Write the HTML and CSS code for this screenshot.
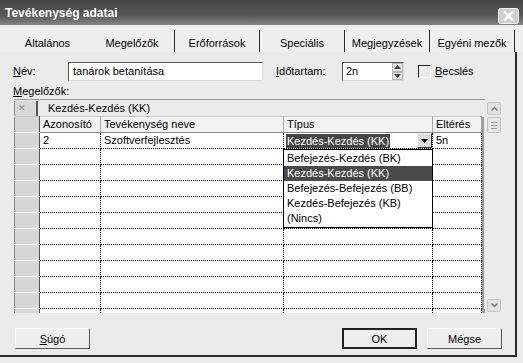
FILE: index.html
```html
<!DOCTYPE html>
<html lang="hu">

<head>
    <meta charset="UTF-8">
    <title>Tevékenység adatai</title>
    <link rel="stylesheet" href="styles.css">
</head>

<body>
    <div class="window">
        <div class="titlebar">
            <span class="title">Tevékenység adatai</span>
            <span class="close">
                <svg width="21" height="16" viewBox="0 0 21 16">
                    <rect x="0.5" y="0.5" width="20" height="15" rx="2" fill="#cfcfcf" stroke="#f2f2f2"/>
                    <path d="M6 3.5 L15 12.5 M15 3.5 L6 12.5" stroke="#fff" stroke-width="2.4"/>
                </svg>
            </span>
        </div>

        <div class="tabs">
            <div class="tab">Általános</div>
            <div class="tab edge">Megelőzők</div>
            <div class="tab edge">Erőforrások</div>
            <div class="tab edge">Speciális</div>
            <div class="tab edge">Megjegyzések</div>
            <div class="tab edge">Egyéni mezők</div>
        </div>

        <div class="page">
            <div class="fields">
                <span class="lbl name-lbl"><u>N</u>év:</span>
                <div class="textbox name-box">tanárok betanítása</div>
                <span class="lbl dur-lbl"><u>I</u>dőtartam:</span>
                <div class="textbox spin">
                    <span class="spin-val">2n</span>
                    <span class="spin-btns">
                        <span class="spin-btn"><svg width="7" height="4" viewBox="0 0 7 4"><path d="M0 4 L3.5 0 L7 4Z" fill="#444"/></svg></span>
                        <span class="spin-btn"><svg width="7" height="4" viewBox="0 0 7 4"><path d="M0 0 L3.5 4 L7 0Z" fill="#444"/></svg></span>
                    </span>
                </div>
                <span class="check"></span>
                <span class="lbl"><u>B</u>ecslés</span>
            </div>

            <div class="lbl pred-lbl"><u>M</u>egelőzők:</div>

            <div class="grid-area">
                <div class="grid">
                    <div class="editbar">
                        <span class="editbtn">✕</span>
                        <span class="edittext">Kezdés-Kezdés (KK)</span>
                    </div>
                    <table>
                        <colgroup>
                            <col class="c-rh">
                            <col class="c-id">
                            <col class="c-name">
                            <col class="c-type">
                            <col class="c-lag">
                            <col class="c-edge">
                        </colgroup>
                        <tr class="head">
                            <th class="rh"></th>
                            <th>Azonosító</th>
                            <th>Tevékenység neve</th>
                            <th>Típus</th>
                            <th>Eltérés</th>
                            <td class="edge"></td>
                        </tr>
                        <tr>
                            <td class="rh"></td>
                            <td>2</td>
                            <td>Szoftverfejlesztés</td>
                            <td class="active">
                                <div class="combo">
                                    <span class="sel">Kezdés-Kezdés (KK)</span>
                                    <span class="ddbtn"><svg width="7" height="4" viewBox="0 0 7 4"><path d="M0 0 L3.5 4 L7 0Z" fill="#000"/></svg></span>
                                </div>
                            </td>
                            <td>5n</td>
                            <td class="edge"></td>
                        </tr>
                        <tr><td class="rh"></td><td></td><td></td><td></td><td></td><td class="edge"></td></tr>
                        <tr><td class="rh"></td><td></td><td></td><td></td><td></td><td class="edge"></td></tr>
                        <tr><td class="rh"></td><td></td><td></td><td></td><td></td><td class="edge"></td></tr>
                        <tr><td class="rh"></td><td></td><td></td><td></td><td></td><td class="edge"></td></tr>
                        <tr><td class="rh"></td><td></td><td></td><td></td><td></td><td class="edge"></td></tr>
                        <tr><td class="rh"></td><td></td><td></td><td></td><td></td><td class="edge"></td></tr>
                        <tr><td class="rh"></td><td></td><td></td><td></td><td></td><td class="edge"></td></tr>
                        <tr><td class="rh"></td><td></td><td></td><td></td><td></td><td class="edge"></td></tr>
                        <tr><td class="rh"></td><td></td><td></td><td></td><td></td><td class="edge"></td></tr>
                        <tr><td class="rh"></td><td></td><td></td><td></td><td></td><td class="edge"></td></tr>
                        <tr><td class="rh"></td><td></td><td></td><td></td><td></td><td class="edge"></td></tr>
                    </table>

                    <!-- open list of the Típus cell -->
                    <div class="dropdown">
                        <div class="opt">Befejezés-Kezdés (BK)</div>
                        <div class="opt on">Kezdés-Kezdés (KK)</div>
                        <div class="opt">Befejezés-Befejezés (BB)</div>
                        <div class="opt">Kezdés-Befejezés (KB)</div>
                        <div class="opt">(Nincs)</div>
                    </div>
                </div>

                <div class="vscroll">
                    <span class="sbtn"><svg width="7" height="5" viewBox="0 0 7 5"><path d="M0.5 4.5 L3.5 1.5 L6.5 4.5" fill="none" stroke="#777" stroke-width="1.5"/></svg></span>
                    <span class="thumb"><i></i><i></i><i></i></span>
                    <span class="track"></span>
                    <span class="sbtn"><svg width="7" height="5" viewBox="0 0 7 5"><path d="M0.5 0.5 L3.5 3.5 L6.5 0.5" fill="none" stroke="#777" stroke-width="1.5"/></svg></span>
                </div>
            </div>

            <div class="buttons">
                <div class="btn"><span><u>S</u>úgó</span></div>
                <div class="btn default">OK</div>
                <div class="btn">Mégse</div>
            </div>
        </div>
    </div>
</body>

</html>
```

FILE: styles.css
```css
body {
    margin: 0;
    background-color: #ebebeb;
    font-family: "Liberation Sans", Arial, sans-serif;
    font-size: 11px;
    color: #000;
}

.window {
    width: 523px;
    height: 363px;
    display: flex;
    flex-direction: column;
    overflow: hidden;
}

.titlebar {
    height: 25px;
    flex: none;
    display: flex;
    justify-content: space-between;
    align-items: flex-start;
    padding: 0 4px 0 5px;
    background: linear-gradient(to bottom, #474747 0%, #565656 60%, #858585 100%);
}

.title {
    color: #fff;
    font-weight: bold;
    font-size: 12px;
    line-height: 12px;
    margin-top: 7px;
}

.close {
    margin-top: 8px;
    height: 16px;
}

.tabs {
    height: 27px;
    flex: none;
    display: flex;
    padding-left: 5px;
    background-color: #efefef;
}

.tab {
    width: 85px;
    height: 22px;
    margin-top: 5px;
    box-sizing: border-box;
    display: flex;
    align-items: center;
    justify-content: center;
    padding-top: 3px;
}

.tab.edge {
    border-right: 1px solid #2a2a2a;
}

.page {
    width: 517px;
    height: 305px;
    flex: none;
    box-sizing: border-box;
    border-right: 2px solid #2a2a2a;
    border-bottom: 2px solid #2a2a2a;
    padding: 10px 13px 0 13px;
    display: flex;
    flex-direction: column;
}

.fields {
    height: 19px;
    display: flex;
    align-items: center;
}

.lbl {
    line-height: 13px;
}

.name-lbl {
    width: 55px;
}

.textbox {
    height: 19px;
    box-sizing: border-box;
    background-color: #fff;
    border-top: 1px solid #555;
    border-left: 1px solid #555;
    border-right: 1px solid #d8d8d8;
    border-bottom: 1px solid #d8d8d8;
    line-height: 17px;
}

.name-box {
    width: 195px;
    padding-left: 4px;
}

.dur-lbl {
    width: 66px;
    margin-left: 13px;
}

.spin {
    width: 62px;
    display: flex;
    justify-content: space-between;
}

.spin-val {
    padding-left: 3px;
}

.spin-btns {
    width: 11px;
    display: flex;
    flex-direction: column;
}

.spin-btn {
    flex: 1;
    display: flex;
    align-items: center;
    justify-content: center;
    background-color: #e6e6e6;
    border: 1px solid #b8b8b8;
}

.check {
    width: 11px;
    height: 11px;
    margin-left: 14px;
    margin-right: 4px;
    border-top: 1px solid #222;
    border-left: 1px solid #222;
    border-right: 1px solid #fafafa;
    border-bottom: 1px solid #fafafa;
}

.pred-lbl {
    margin-top: 4px;
    height: 13px;
}

/* grid with its scrollbar */
.grid-area {
    margin-top: 1px;
    height: 214px;
    display: flex;
}

.grid {
    flex: 1;
    margin-left: 1px;
    position: relative;
    overflow: hidden;
}

.editbar {
    height: 17px;
    box-sizing: border-box;
    border-top: 1px solid #9a9a9a;
    display: flex;
    align-items: center;
}

.editbtn {
    width: 24px;
    height: 15px;
    box-sizing: border-box;
    border-left: 1px solid #888;
    border-right: 2px solid #555;
    background-color: #d9d9d9;
    color: #8a8a8a;
    font-size: 9px;
    line-height: 15px;
    padding-left: 3px;
}

.edittext {
    margin-left: 10px;
}

table {
    border-collapse: collapse;
    table-layout: fixed;
    width: 470px;
}

.c-rh { width: 25px; }
.c-id { width: 61px; }
.c-name { width: 183px; }
.c-type { width: 149px; }
.c-lag { width: 49px; }
.c-edge { width: 3px; }

tr {
    height: 16px;
}

th,
td {
    padding: 0 3px;
    line-height: 15px;
    white-space: nowrap;
    overflow: hidden;
    text-align: left;
    font-weight: normal;
}

td {
    background-color: #fff;
    border-right: 1px dotted #000;
    border-bottom: 1px dotted #000;
}

.head th {
    background-color: #f2f2f2;
    border-right: 1px solid #a8a8a8;
    border-bottom: 1px solid #8a8a8a;
    border-top: 1px solid #c8c8c8;
}

.rh,
.head th.rh {
    background-color: #d6d6d6;
    border-left: 1px solid #888;
    border-right: 1px solid #555;
    border-bottom: 1px solid #f4f4f4;
}

td.edge,
.head td.edge {
    padding: 0;
    border: none;
    background: repeating-conic-gradient(#333 0 25%, #fff 0 50%) 0 0 / 2px 2px;
}

td.active {
    padding: 0 0 0 2px;
}

.combo {
    display: flex;
    justify-content: space-between;
    align-items: center;
}

.sel {
    background-color: #474747;
    color: #fff;
    padding: 0 1px;
    line-height: 14px;
}

.ddbtn {
    width: 15px;
    height: 15px;
    box-sizing: border-box;
    display: flex;
    align-items: center;
    justify-content: center;
    background-color: #dcdcdc;
    border: 1px solid;
    border-color: #f6f6f6 #333 #333 #f6f6f6;
}

.dropdown {
    position: absolute;
    left: 269px;
    top: 50px;
    width: 148px;
    background-color: #fff;
    border: 1px solid #000;
    padding: 1px 0;
}

.opt {
    height: 15px;
    line-height: 15px;
    padding-left: 3px;
}

.opt.on {
    background-color: #4a4a4a;
    color: #fff;
}

.vscroll {
    width: 14px;
    margin-left: 2px;
    margin-right: 1px;
    padding-top: 3px;
    padding-bottom: 0;
    display: flex;
    flex-direction: column;
    height: 213px;
    box-sizing: border-box;
}

.sbtn {
    height: 13px;
    display: flex;
    align-items: center;
    justify-content: center;
    background-color: #e2e2e2;
    border: 1px solid #c4c4c4;
    border-radius: 2px;
    box-sizing: border-box;
}

.thumb {
    height: 16px;
    margin-top: 2px;
    box-sizing: border-box;
    background-color: #e6e6e6;
    border: 1px solid #c0c0c0;
    border-radius: 2px;
    display: flex;
    flex-direction: column;
    align-items: center;
    justify-content: center;
    gap: 2px;
}

.thumb i {
    width: 6px;
    height: 1px;
    background-color: #999;
}

.track {
    flex: 1;
}

.buttons {
    margin-top: 15px;
    display: flex;
    padding-left: 2px;
}

.btn {
    width: 75px;
    height: 21px;
    box-sizing: border-box;
    display: flex;
    align-items: center;
    justify-content: center;
    background-color: #eeeeee;
    border: 1px solid;
    border-color: #f9f9f9 #555 #555 #f9f9f9;
}

.btn.default {
    margin-left: auto;
    margin-right: 10px;
    border: 2px solid #222;
}
```
